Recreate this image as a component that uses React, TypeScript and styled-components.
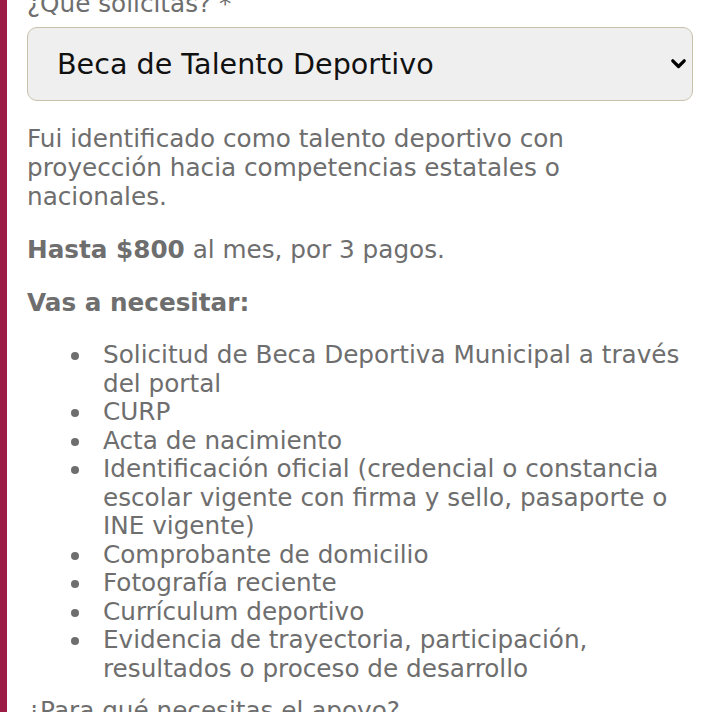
import React from "react";
import styled, { createGlobalStyle } from "styled-components";

const Global = createGlobalStyle`
  html, body {
    margin: 0;
    padding: 0;
    background: #ffffff;
    overflow: hidden;
  }
  body {
    font-family: "DejaVu Sans", "Liberation Sans", sans-serif;
    color: #6e6e6e;
  }
`;

const Panel = styled.section`
  border-left: 7px solid #9c1c46;
  padding: 0 27px 0 20px;
  margin-top: -10px;
  min-height: 780px;
  font-size: 24.7px;
  line-height: 28.9px;
`;

const Label = styled.label`
  display: block;
  margin: 0;
`;

const SelectWrap = styled.div`
  position: relative;
  margin-top: 8px;
`;

const Select = styled.select`
  appearance: none;
  -webkit-appearance: none;
  width: 100%;
  height: 74px;
  box-sizing: border-box;
  border: 1.5px solid #c9c0aa;
  border-radius: 10px;
  background: #efefef;
  color: #111111;
  font-family: "DejaVu Sans", "Liberation Sans", sans-serif;
  font-size: 28.6px;
  padding: 0 50px 0 29px;
  margin: 0;
  outline: none;
`;

const Chevron = styled.svg`
  position: absolute;
  right: 7px;
  top: 50%;
  width: 15px;
  height: 10px;
  transform: translateY(-50%);
  pointer-events: none;
`;

const Text = styled.p`
  margin: 24px 0 0;
`;

const List = styled.ul`
  margin: 24px 0 0;
  padding-left: 66px;
  line-height: 28.5px;
`;

const Item = styled.li`
  padding-left: 10px;

  &::marker {
    color: #6e6e6e;
  }
`;

const Question = styled.p`
  margin: 14px 0 0;
`;

const requisitos = [
  "Solicitud de Beca Deportiva Municipal a través del portal",
  "CURP",
  "Acta de nacimiento",
  "Identificación oficial (credencial o constancia escolar vigente con firma y sello, pasaporte o INE vigente)",
  "Comprobante de domicilio",
  "Fotografía reciente",
  "Currículum deportivo",
  "Evidencia de trayectoria, participación, resultados o proceso de desarrollo",
];

export default function App() {
  return (
    <>
      <Global />
      <Panel>
        <Label htmlFor="tipo">¿Qué solicitas? *</Label>
        <SelectWrap>
          <Select id="tipo" defaultValue="talento">
            <option value="talento">Beca de Talento Deportivo</option>
          </Select>
          <Chevron viewBox="0 0 15 10">
            <path d="M1.8 1.8 L7.5 7.5 L13.2 1.8" fill="none" stroke="#000" strokeWidth="3.2" strokeLinecap="round" strokeLinejoin="round" />
          </Chevron>
        </SelectWrap>
        <Text>
          Fui identificado como talento deportivo con proyección hacia competencias estatales o
          nacionales.
        </Text>
        <Text>
          <strong>Hasta $800</strong> al mes, por 3 pagos.
        </Text>
        <Text>
          <strong>Vas a necesitar:</strong>
        </Text>
        <List>
          {requisitos.map((r) => (
            <Item key={r}>{r}</Item>
          ))}
        </List>
        <Question>¿Para qué necesitas el apoyo?</Question>
      </Panel>
    </>
  );
}
